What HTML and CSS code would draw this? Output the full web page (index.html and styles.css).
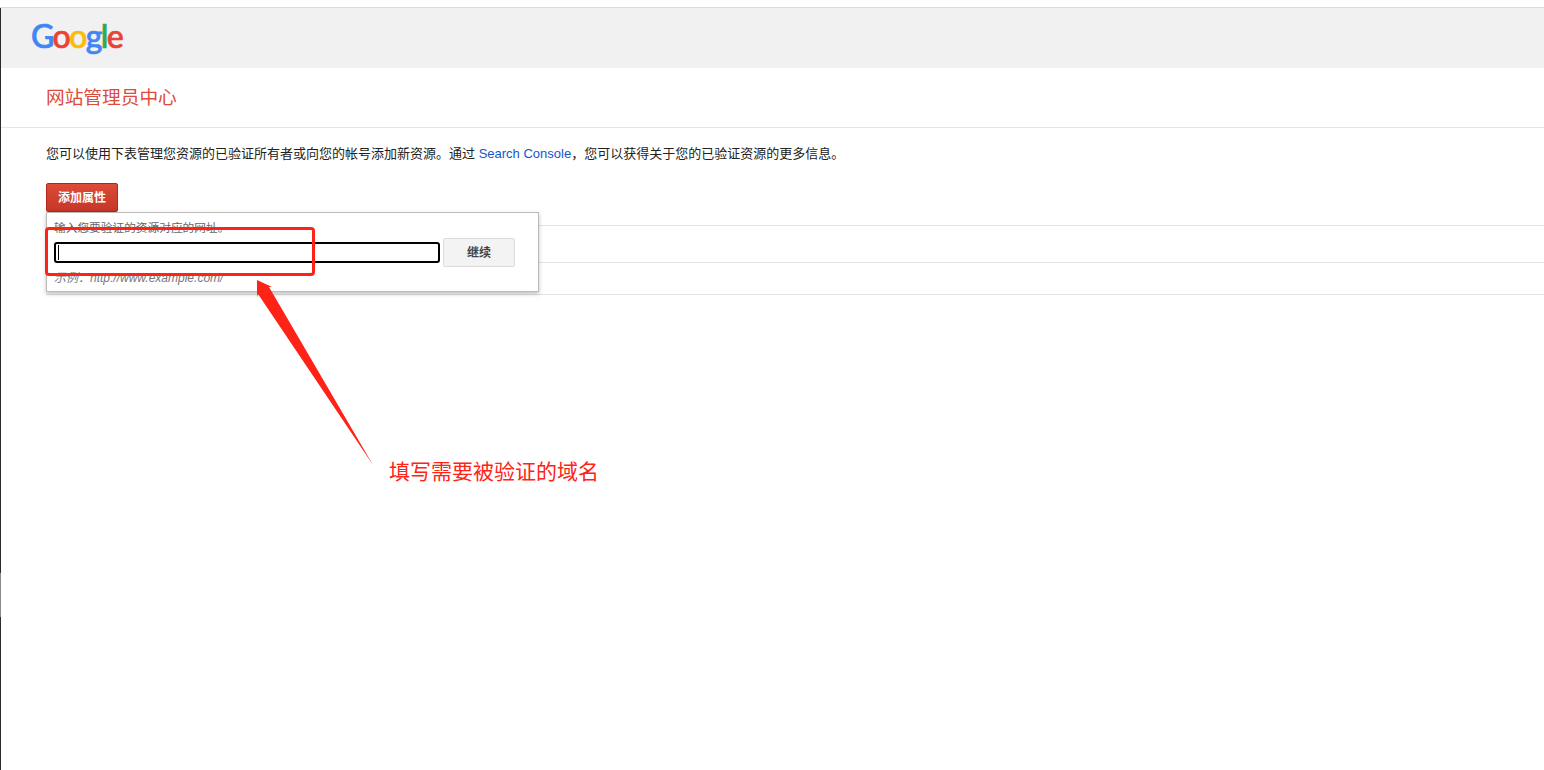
FILE: index.html
```html
<!DOCTYPE html>
<html lang="zh-CN">
  <head>
    <meta charset="UTF-8" />
    <title>网站管理员中心</title>
    <link rel="stylesheet" href="styles.css">
  </head>
  <body>
    <div class="edge"></div>
    <div class="edge-gap"></div>

    <div class="top-strip"></div>

    <header class="header">
      <div class="logo" aria-label="Google">
        <span class="blue">G</span><span class="red">o</span><span class="yellow">o</span><span class="blue">g</span><span class="green">l</span><span class="red">e</span>
      </div>
    </header>

    <div class="title-bar">
      <h1>网站管理员中心</h1>
    </div>

    <main class="content">
      <p class="intro">您可以使用下表管理您资源的已验证所有者或向您的帐号添加新资源。通过 <a href="#">Search Console</a>，您可以获得关于您的已验证资源的更多信息。</p>

      <div class="add-area">
        <button type="button" class="add-btn">添加属性</button>

        <div class="popup">
          <div class="popup-label">输入您要验证的资源对应的网址。</div>
          <div class="popup-row">
            <div class="field">
              <input type="text" class="url-input" />
              <span class="caret"></span>
            </div>
            <button type="button" class="next-btn">继续</button>
          </div>
          <div class="popup-hint">示例：http://www.example.com/</div>
        </div>
      </div>

      <div class="rows">
        <div class="row row-first"></div>
        <div class="row row-second"></div>
      </div>
    </main>

    <div class="mark-box"></div>
    <svg class="mark-arrow" width="130" height="190" viewBox="0 0 130 190">
      <polygon points="2,0 17,7 14,7 118,185 3,14 2,17" fill="#ff2216" />
    </svg>
    <div class="mark-text">填写需要被验证的域名</div>
  </body>
</html>
```

FILE: styles.css
```css
* {
  margin: 0;
  padding: 0;
  box-sizing: border-box;
}

body {
  font-family: Arial, "Liberation Sans", "Noto Sans CJK SC", sans-serif;
  font-size: 13px;
  color: #222;
  background: #fff;
  height: 770px;
  overflow: hidden;
}

.edge {
  position: absolute;
  left: 0;
  top: 8px;
  width: 1px;
  height: 762px;
  background: #2b2b2f;
}

.edge-gap {
  position: absolute;
  left: 0;
  top: 573px;
  width: 1px;
  height: 44px;
  background: #8a8a8a;
}

.top-strip {
  height: 8px;
  border-bottom: 1px solid #dcdcdc;
}

.header {
  height: 60px;
  background: #f1f1f1;
  padding-left: 31px;
  display: flex;
  align-items: flex-start;
}

.logo {
  font-family: Lato, sans-serif;
  font-size: 32px;
  font-weight: 500;
  line-height: 56px;
  letter-spacing: -1.6px;
  -webkit-text-stroke: 0.7px;
}

.blue { color: #4285f4; }
.red { color: #ea4335; }
.yellow { color: #fbbc05; }
.green { color: #34a853; }

.title-bar {
  height: 60px;
  padding-left: 46px;
  border-bottom: 1px solid #e5e5e5;
}

.title-bar h1 {
  font-size: 18.7px;
  font-weight: normal;
  line-height: 60px;
  color: #dd4b39;
}

.content {
  padding-left: 46px;
}

.intro {
  margin-top: 16px;
  line-height: 19px;
  color: #222;
}

.intro a {
  color: #15c;
  text-decoration: none;
}

.add-area {
  position: relative;
  margin-top: 20px;
  height: 29px;
}

.add-btn {
  display: block;
  width: 72px;
  height: 29px;
  padding-bottom: 3px;
  font-family: inherit;
  font-size: 12px;
  font-weight: bold;
  color: #fff;
  background: linear-gradient(#dd4b39, #c53727);
  border: 1px solid #b0281a;
  border-radius: 2px;
}

.popup {
  position: absolute;
  left: 0;
  top: 29px;
  width: 493px;
  height: 80px;
  padding: 8px 7px 0;
  background: #fff;
  border: 1px solid #bbb;
  box-shadow: 0 2px 4px rgba(0, 0, 0, 0.25);
  z-index: 1;
}

.popup-label {
  font-size: 11.7px;
  line-height: 14px;
  color: #666;
}

.popup-row {
  display: flex;
  align-items: center;
  gap: 3px;
  margin-top: 3px;
}

.field {
  position: relative;
  width: 386px;
  height: 21px;
}

.url-input {
  display: block;
  width: 100%;
  height: 100%;
  border: 2px solid #000;
  border-radius: 3px;
  background: #fff;
  outline: none;
}

.caret {
  position: absolute;
  left: 4px;
  top: 3px;
  width: 1px;
  height: 15px;
  background: #000;
}

.next-btn {
  width: 72px;
  height: 29px;
  padding-bottom: 2px;
  font-family: inherit;
  font-size: 12px;
  font-weight: bold;
  color: #444;
  background: #f3f3f3;
  border: 1px solid #dcdcdc;
  border-radius: 2px;
}

.popup-hint {
  margin-top: 4px;
  font-size: 12px;
  font-style: italic;
  line-height: 14px;
  color: #777;
}

.rows {
  margin-top: 13px;
}

.row {
  border-top: 1px solid #e5e5e5;
}

.row-first {
  height: 37px;
}

.row-second {
  height: 33px;
  border-bottom: 1px solid #e5e5e5;
}

.mark-box {
  position: absolute;
  left: 45px;
  top: 227px;
  width: 270px;
  height: 49px;
  border: 3px solid #ff2216;
  border-radius: 4px;
  z-index: 2;
}

.mark-arrow {
  position: absolute;
  left: 255px;
  top: 280px;
  z-index: 2;
}

.mark-text {
  position: absolute;
  left: 389px;
  top: 459px;
  font-size: 21px;
  line-height: 26px;
  color: #ff2216;
  z-index: 2;
}
```
